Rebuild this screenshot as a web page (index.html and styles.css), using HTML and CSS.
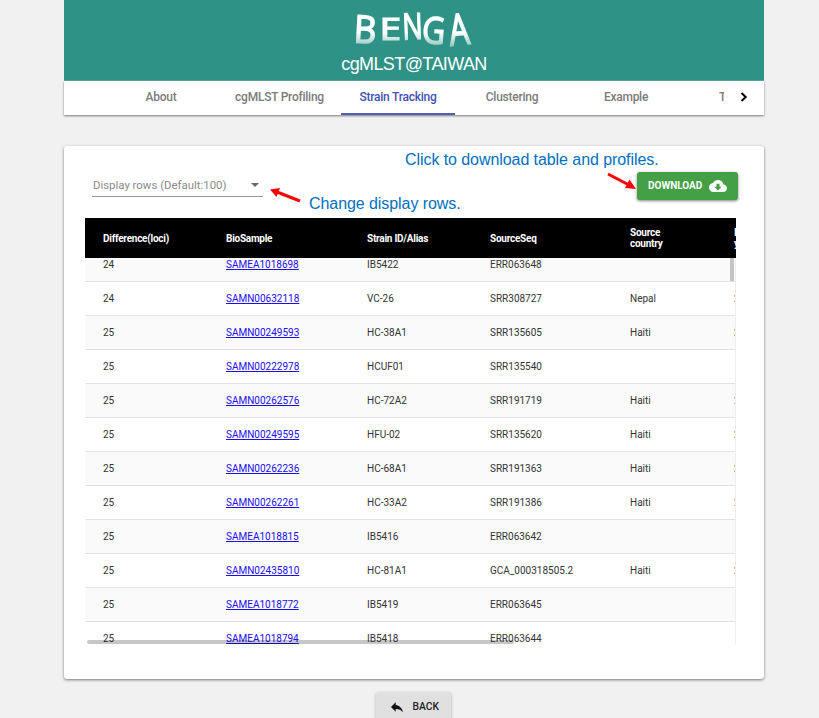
FILE: index.html
```html
<!DOCTYPE html>
<html lang="en">
<head>
<meta charset="utf-8">
<title>BENGA cgMLST@TAIWAN</title>
<link rel="stylesheet" href="styles.css">
</head>
<body>
<div class="page">
  <header class="banner">
    <div class="logo"><span class="l-b">B</span><span class="l-e">E</span><span class="l-n">N</span><span class="l-g">G</span><span class="l-a">A</span></div>
    <div class="subtitle">cgMLST@TAIWAN</div>
  </header>
  <nav class="tabs">
    <a class="tab">About</a>
    <a class="tab wide">cgMLST Profiling</a>
    <a class="tab active">Strain Tracking</a>
    <a class="tab">Clustering</a>
    <a class="tab">Example</a>
    <a class="tab cut"><span>T</span></a>
    <svg class="next" viewBox="0 0 8 10"><path d="M1.5 1 5.7 5 1.5 9"/></svg>
  </nav>
  <main class="card">
    <div class="toolbar">
      <div class="select"><span>Display rows (Default:100)</span><i class="caret"></i></div>
      <button class="download">DOWNLOAD
        <svg viewBox="0 0 24 24"><path d="M19.35 10.04C18.67 6.59 15.64 4 12 4 9.11 4 6.6 5.64 5.35 8.04 2.34 8.36 0 10.91 0 14c0 3.31 2.69 6 6 6h13c2.76 0 5-2.24 5-5 0-2.64-2.05-4.78-4.65-4.96zM17 13l-5 5-5-5h3V9h4v4h3z"/></svg>
      </button>
    </div>
    <div class="grid">
      <div class="row head"><span>Difference(loci)</span><span>BioSample</span><span>Strain ID/Alias</span><span>SourceSeq</span><span>Source<br>country</span><span>I<br>y</span></div>
      <div class="body">
        <div class="rows">
          <div class="row"><span>24</span><a>SAMEA1018698</a><span>IB5422</span><span>ERR063648</span><span></span><span></span></div>
          <div class="row"><span>24</span><a>SAMN00632118</a><span>VC-26</span><span>SRR308727</span><span>Nepal</span><span>2</span></div>
          <div class="row"><span>25</span><a>SAMN00249593</a><span>HC-38A1</span><span>SRR135605</span><span>Haiti</span><span>2</span></div>
          <div class="row"><span>25</span><a>SAMN00222978</a><span>HCUF01</span><span>SRR135540</span><span></span><span></span></div>
          <div class="row"><span>25</span><a>SAMN00262576</a><span>HC-72A2</span><span>SRR191719</span><span>Haiti</span><span>2</span></div>
          <div class="row"><span>25</span><a>SAMN00249595</a><span>HFU-02</span><span>SRR135620</span><span>Haiti</span><span>2</span></div>
          <div class="row"><span>25</span><a>SAMN00262236</a><span>HC-68A1</span><span>SRR191363</span><span>Haiti</span><span>2</span></div>
          <div class="row"><span>25</span><a>SAMN00262261</a><span>HC-33A2</span><span>SRR191386</span><span>Haiti</span><span>2</span></div>
          <div class="row"><span>25</span><a>SAMEA1018815</a><span>IB5416</span><span>ERR063642</span><span></span><span></span></div>
          <div class="row"><span>25</span><a>SAMN02435810</a><span>HC-81A1</span><span>GCA_000318505.2</span><span>Haiti</span><span>2</span></div>
          <div class="row"><span>25</span><a>SAMEA1018772</a><span>IB5419</span><span>ERR063645</span><span></span><span></span></div>
          <div class="row"><span>25</span><a>SAMEA1018794</a><span>IB5418</span><span>ERR063644</span><span></span><span></span></div>
        </div>
        <div class="vbar"></div>
        <div class="hbar"></div>
      </div>
    </div>
    <div class="note note-download">Click to download table and profiles.</div>
    <div class="note note-rows">Change display rows.</div>
    <svg class="arrow arrow-download" viewBox="0 0 30 19"><path class="shaft" d="M1 2 22 13"/><path d="M29 17 18 16 22.5 7.5z"/></svg>
    <svg class="arrow arrow-rows" viewBox="0 0 32 16"><path class="shaft" d="M31 14 8 5"/><path d="M1 2.5 11 1 7.5 10z"/></svg>
  </main>
  <button class="back">
    <svg viewBox="0 0 24 24"><path d="M10 9V5l-7 7 7 7v-4.1c5 0 8.5 1.6 11 5.1-1-5-4-10-11-11z"/></svg>BACK
  </button>
</div>
</body>
</html>
```
FILE: styles.css
```css
* { box-sizing: border-box; }
body {
  margin: 0;
  height: 718px;
  overflow: hidden;
  background: #f1f1f1;
  font-family: Roboto, sans-serif;
}
.page {
  width: 700px;
  margin-left: 64px;
  display: flex;
  flex-direction: column;
}
.banner {
  height: 81px;
  background: #2f9286;
  border-bottom: 1px solid #5aa89f;
  color: #fff;
  display: flex;
  flex-direction: column;
  align-items: center;
}
.logo {
  width: 120px;
  height: 44px;
  margin: 6px 0 0 -5px;
  display: flex;
  justify-content: space-between;
  font: 400 41px/42px "Open Sans", sans-serif;
  -webkit-text-stroke: 1.6px #fff;
  -webkit-mask-image: linear-gradient(#000 60%, rgba(0, 0, 0, .5) 90%);
  mask-image: linear-gradient(#000 60%, rgba(0, 0, 0, .5) 90%);
}
.logo span { display: block; transform-origin: 50% 50%; }
.l-b { transform: translateY(1px) rotate(3deg) scale(.85, .93); }
.l-e { transform: translateY(1px) scale(.95, .76); }
.l-n { transform: translateY(-2px) rotate(-2deg) scale(.66, .88); margin: 0 -5px; }
.l-g { transform: translateY(2px) rotate(4deg) scale(.78, .9); margin: 0 -4px; }
.l-a { transform: translateY(1px) rotate(-6deg) scale(.78, 1.05); }
.subtitle {
  margin-top: 4px;
  font: 18px/21px "Liberation Sans", sans-serif;
  letter-spacing: -.6px;
}
.tabs {
  height: 34px;
  background: #fff;
  box-shadow: 0 1px 2px rgba(0, 0, 0, .5);
  display: flex;
  padding-left: 40px;
}
.tab {
  width: 114px;
  font-size: 12px;
  font-weight: 500;
  letter-spacing: -.3px;
  letter-spacing: -.25px;
  line-height: 33px;
  text-align: center;
  color: #7b7b7b;
  white-space: nowrap;
}
.tab.wide { width: 123px; }
.tab.active { color: #3f51b5; border-bottom: 2px solid #4f5fb5; }
.tab.cut { width: 41px; padding-left: 36px; text-align: left; overflow: hidden; }
.next {
  width: 8px;
  height: 10px;
  margin: 11px 0 0 16px;
  fill: none;
  stroke: #000;
  stroke-width: 2;
}
.card {
  position: relative;
  height: 533px;
  margin-top: 31px;
  padding: 26px 26px 0 21px;
  background: #fff;
  border-radius: 3px;
  box-shadow: 0 1px 3px rgba(0, 0, 0, .5);
}
.toolbar {
  height: 46px;
  display: flex;
  justify-content: space-between;
  align-items: flex-start;
  padding-left: 7px;
}
.select {
  width: 171px;
  height: 25px;
  border-bottom: 1px solid #999;
  display: flex;
  justify-content: space-between;
  padding: 0 4px 0 1px;
  font-size: 11.4px;
  line-height: 27px;
  color: #8b8b8b;
}
.caret {
  border: 4px solid transparent;
  border-top-color: #666;
  border-bottom: 0;
  margin-top: 11px;
  height: 4px;
}
button { border: 0; font: 500 11px/20px Roboto, sans-serif; }
.download {
  width: 101px;
  height: 28px;
  padding: 0 11px;
  display: flex;
  align-items: center;
  justify-content: space-between;
  background: #43a047;
  color: #fff;
  font-size: 10px;
  font-weight: 700;
  border-radius: 3px;
  box-shadow: 0 1px 3px rgba(0, 0, 0, .5);
}
.download svg { width: 18px; height: 18px; fill: #fff; }
.grid { width: 651px; }
.row {
  display: grid;
  grid-template-columns: 123px 141px 123px 140px 104px 20px;
  align-items: center;
  height: 34px;
  padding-left: 18px;
  border-bottom: 1px solid #e4e4e4;
  overflow: hidden;
  font-size: 10px;
  line-height: 12px;
  color: #333;
}
.row a { color: #1a0dee; text-decoration: underline; }
.row:nth-child(odd) { background: #fafafa; }
.row.head {
  height: 40px;
  border: 0;
  background: #000;
  color: #fff;
  font-weight: 700;
  line-height: 11px;
  letter-spacing: -.25px;
}
.body {
  position: relative;
  height: 387px;
  overflow: hidden;
  border-right: 1px solid #eee;
}
.rows { margin-top: -10px; }
.vbar {
  position: absolute;
  top: 0;
  right: 1px;
  width: 4px;
  height: 23px;
  background: #c4c4c4;
}
.hbar {
  position: absolute;
  left: 2px;
  bottom: 1px;
  width: 427px;
  height: 4px;
  border-radius: 2px;
  background: rgba(0, 0, 0, .22);
}
.note {
  position: absolute;
  font: 16px/18px "Liberation Sans", sans-serif;
  letter-spacing: -.07px;
  color: #0070c0;
  white-space: nowrap;
}
.note-download { left: 341px; top: 5px; }
.note-rows { left: 245px; top: 49px; }
.arrow { position: absolute; fill: #f00; }
.shaft { stroke: #f00; stroke-width: 3; }
.arrow-download { left: 543px; top: 26px; width: 30px; height: 19px; }
.arrow-rows { left: 205px; top: 41px; width: 32px; height: 16px; }
.back {
  width: 75px;
  height: 32px;
  margin: 13px 0 0 312px;
  padding: 0 12px 3px 13px;
  display: flex;
  align-items: center;
  justify-content: space-between;
  background: #e0e0e0;
  color: #222;
  font-size: 10.3px;
  border-radius: 3px;
  box-shadow: 0 1px 3px rgba(0, 0, 0, .3);
}
.back svg { width: 16px; height: 16px; fill: #111; }
```
